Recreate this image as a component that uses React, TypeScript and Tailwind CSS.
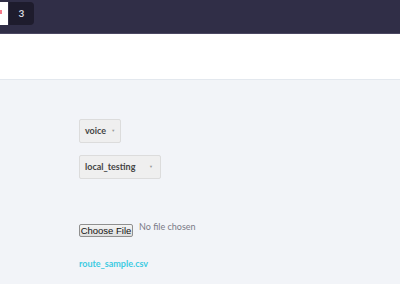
import React from "react";

export default function App() {
  return (
    <div className="w-[400px] h-[284px] overflow-hidden bg-[#f2f4f8] font-['Lato','Noto_Sans',sans-serif]">
      <div className="h-[34px] bg-[#302e47] border-b border-[#4b4762] flex items-start pt-[2px] gap-[1px]">
        <div className="w-[8px] h-[23px] bg-white relative">
          <div className="absolute left-0 top-[8px] w-[2px] h-[4px] bg-[#f47a8a]" />
        </div>
        <div className="w-[25px] h-[23px] bg-[#1e1c2d] rounded-[4px] rounded-l-none flex items-center justify-center text-[10px] font-bold text-[#d8d8e0]">
          3
        </div>
      </div>
      <div className="h-[46px] bg-white border-b border-[#e3e8ee]" />
      <div className="pl-[79px] pt-[39px] flex flex-col items-start">
        <div className="w-[42px] h-[24px] bg-[#efefef] border border-[#dcdcdc] rounded-[2px] flex items-center pl-[5px] text-[9px] font-bold text-[#444]">
          <span>voice</span>
          <span className="ml-[5px] text-[4px] text-[#999]">▼</span>
        </div>
        <div className="mt-[12px] w-[82px] h-[24px] bg-[#efefef] border border-[#dcdcdc] rounded-[2px] flex items-center justify-between pl-[5px] pr-[7px] text-[9px] font-bold text-[#444]">
          <span>local_testing</span>
          <span className="text-[4px] text-[#999]">▼</span>
        </div>
        <div className="mt-[45px] flex items-start">
          <div className="w-[54px] h-[13px] border border-[#8f8f8f] rounded-[2px] bg-gradient-to-b from-[#f4f4f4] to-[#dedede] flex items-center justify-center whitespace-nowrap text-[9.5px] text-[#111] font-['Liberation_Sans',Arial,sans-serif] leading-none">
            Choose File
          </div>
          <span className="ml-[6px] -mt-[2px] text-[9px] text-[#7a7a86] leading-none whitespace-nowrap">No file chosen</span>
        </div>
        <div className="mt-[22px] text-[9px] font-bold text-[#3dcbe2] leading-none">route_sample.csv</div>
      </div>
    </div>
  );
}
